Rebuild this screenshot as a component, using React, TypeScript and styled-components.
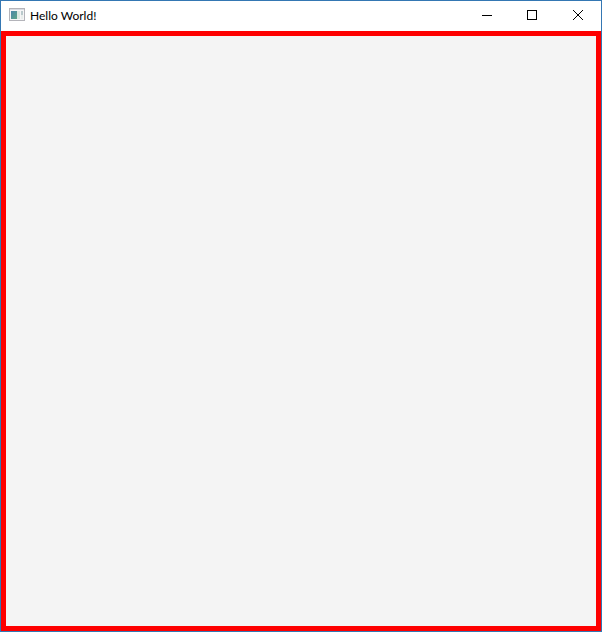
import React from "react";
import styled, { createGlobalStyle } from "styled-components";

const GlobalStyle = createGlobalStyle`
  * { box-sizing: border-box; }
  body { margin: 0; }
`;

const Window = styled.div`
  display: flex;
  flex-direction: column;
  min-height: 100vh;
  border: 1px solid #3477b3;
  background: #ffffff;
`;

const TitleBar = styled.header`
  display: flex;
  align-items: center;
  height: 30px;
  padding: 0 0 2px 8px;
`;

const AppIcon = styled.svg`
  flex: none;
  width: 16px;
  height: 16px;
`;

const Title = styled.h1`
  flex: 1;
  margin: 0;
  padding: 2px 0 0 5px;
  color: #000000;
  font: 400 12px/16px "Segoe UI", Lato, "Open Sans", sans-serif;
`;

const WindowControls = styled.div`
  display: flex;
  height: 100%;
`;

const ControlButton = styled.button<{ $danger?: boolean }>`
  display: flex;
  align-items: center;
  justify-content: center;
  width: 46px;
  height: 100%;
  padding: 0;
  border: 0;
  background: transparent;
  color: #000000;

  &:hover {
    background: ${({ $danger }) => ($danger ? "#e81123" : "#e5e5e5")};
    color: ${({ $danger }) => ($danger ? "#ffffff" : "#000000")};
  }
`;

const Glyph = styled.svg`
  width: 10px;
  height: 10px;
  fill: none;
  stroke: currentColor;
  overflow: visible;
`;

const Content = styled.main`
  flex: 1;
  border: 5px solid #fe0000;
  background: #f4f4f4;
`;

export default function App() {
  return (
    <>
      <GlobalStyle />
      <Window>
        <TitleBar>
          <AppIcon viewBox="0 0 16 16" aria-hidden="true">
            <defs>
              <linearGradient id="pane" x1="0" y1="0" x2="1" y2="1">
                <stop offset="0" stopColor="#4a86a8" />
                <stop offset="1" stopColor="#5da688" />
              </linearGradient>
            </defs>
            <rect x="0.5" y="1.5" width="15" height="12" fill="#f5f5f6" stroke="#b4b4ba" />
            <path d="M1 2.5H15" stroke="#d8dbe2" />
            <rect x="2" y="4" width="6" height="8" fill="url(#pane)" />
            <rect x="8" y="4" width="3" height="8" fill="#dbe8e1" />
            <rect x="12" y="4" width="2" height="4" fill="#b9c9cc" />
            <rect x="12" y="8" width="2" height="4" fill="#e9edeb" />
          </AppIcon>
          <Title>Hello World!</Title>
          <WindowControls>
            <ControlButton type="button" aria-label="Minimize">
              <Glyph viewBox="0 0 10 10" shapeRendering="crispEdges"><path d="M1 5.5H11" /></Glyph>
            </ControlButton>
            <ControlButton type="button" aria-label="Maximize">
              <Glyph viewBox="0 0 10 10" shapeRendering="crispEdges"><rect x="0.5" y="0.5" width="9" height="9" /></Glyph>
            </ControlButton>
            <ControlButton type="button" aria-label="Close" $danger>
              <Glyph viewBox="0 0 10 10"><path d="M0 0L10 10M10 0L0 10" /></Glyph>
            </ControlButton>
          </WindowControls>
        </TitleBar>
        <Content />
      </Window>
    </>
  );
}
